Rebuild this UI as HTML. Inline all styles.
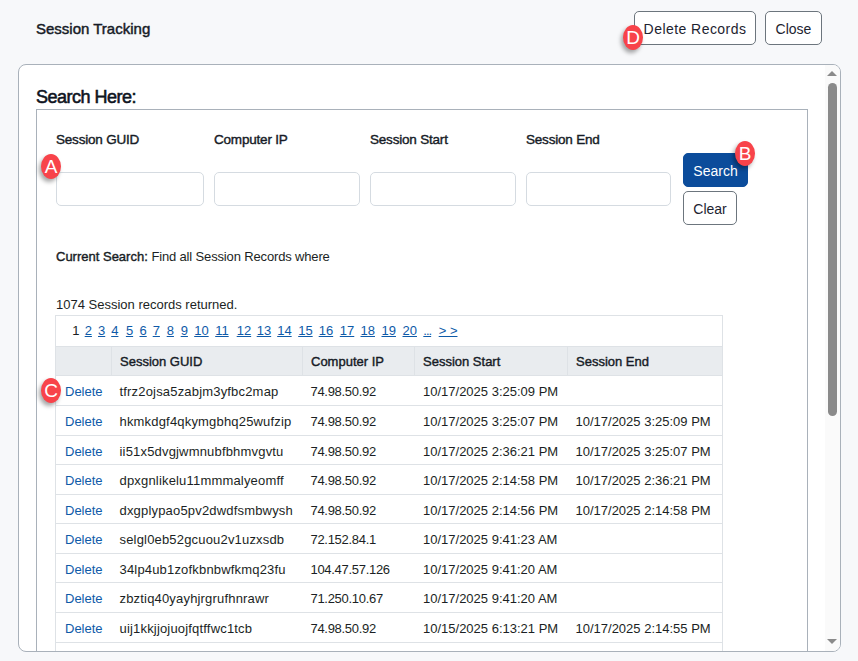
<!DOCTYPE html>
<html>
<head>
<meta charset="utf-8">
<style>
html,body{margin:0;padding:0;}
body{width:858px;height:661px;overflow:hidden;background:#f7f8fa;font-family:"Liberation Sans",sans-serif;color:#1b1f24;position:relative;}
.abs{position:absolute;white-space:nowrap;}
.title{left:36px;top:20px;font-size:15px;font-weight:normal;line-height:17px;color:#161b26;-webkit-text-stroke:0.45px #161b26;}
.btn{position:absolute;box-sizing:border-box;border:1px solid #6c757d;border-radius:5px;background:#fff;font-size:14px;line-height:32px;padding-top:1px;text-align:center;color:#1d2330;}
.badge{position:absolute;width:20px;height:25px;border-radius:50%;background:#f8434a;color:#fff;font-size:19px;line-height:25px;text-align:center;box-shadow:-2px 3px 4px rgba(0,0,0,0.35);}
.panel{position:absolute;left:18px;top:64px;width:823px;height:588px;box-sizing:border-box;border:1px solid #a9b1ba;border-radius:8px;background:#fff;overflow:hidden;}
.sb{position:absolute;left:806px;top:0;width:15px;height:586px;background:#fafafa;}
.inner{position:absolute;left:-19px;top:-65px;width:858px;height:661px;}
.up{position:absolute;left:2px;top:6px;width:0;height:0;border-left:5px solid transparent;border-right:5px solid transparent;border-bottom:5px solid #8a8a8a;}
.dn{position:absolute;left:2px;top:574px;width:0;height:0;border-left:5px solid transparent;border-right:5px solid transparent;border-top:5px solid #8a8a8a;}
.thumb{position:absolute;left:3px;top:18px;width:9px;height:333px;border-radius:5px;background:#8a8a8a;}
.legend{left:36px;top:88px;font-size:18px;letter-spacing:-0.5px;font-weight:normal;line-height:19px;color:#0e1421;-webkit-text-stroke:0.55px #0e1421;}
.fs{position:absolute;left:36px;top:109px;width:772px;height:600px;box-sizing:border-box;border:1px solid #a9b1ba;}
.lbl{position:absolute;top:132px;font-size:13.5px;letter-spacing:-0.2px;font-weight:normal;line-height:15px;color:#161b26;-webkit-text-stroke:0.4px #161b26;}
.inp{position:absolute;top:172px;height:34px;box-sizing:border-box;border:1px solid #d5dbe1;border-radius:5px;background:#fff;}
.txt{font-size:13px;line-height:16px;}
table{position:absolute;left:55px;top:315px;border-collapse:collapse;font-size:13px;table-layout:fixed;}
td,th{border:1px solid #dee2e6;padding:0 0 0 8px;text-align:left;white-space:nowrap;box-sizing:border-box;}
th{background:#e9ecef;font-size:13px;font-weight:normal;color:#161b26;-webkit-text-stroke:0.4px #161b26;}
td{color:#1b1f24;border-left:none;border-right:none;}
td:first-child{border-left:1px solid #dee2e6;}
td:last-child{border-right:1px solid #dee2e6;}
tr td:nth-child(2){letter-spacing:0.18px;}
tr td:nth-child(3){letter-spacing:-0.3px;}
tr td:nth-child(4){padding-left:8.5px;}
td{padding-top:2px;}
.sb2{-webkit-text-stroke:0.4px #161b26;}
td.d{color:#0e5aa8;padding-left:9px;}
.pager td{border-bottom:1px solid #dee2e6;}
.pg{position:absolute;top:323px;font-size:13px;line-height:16px;white-space:nowrap;color:#1b1f24;}
.ln{color:#0e5aa8;text-decoration:underline;}
</style>
</head>
<body>
<div class="abs title">Session Tracking</div>
<div class="btn" style="left:634px;top:11px;width:122px;height:34px;letter-spacing:0.45px;">Delete Records</div>
<div class="btn" style="left:765px;top:11px;width:57px;height:34px;">Close</div>
<div class="badge" style="left:623px;top:25px;">D</div>

<div class="panel"><div class="inner">
<div class="abs legend">Search Here:</div>
<div class="fs"></div>
<div class="lbl" style="left:56px;">Session GUID</div>
<div class="lbl" style="left:214px;">Computer IP</div>
<div class="lbl" style="left:370px;">Session Start</div>
<div class="lbl" style="left:526px;">Session End</div>
<div class="inp" style="left:56px;width:148px;"></div>
<div class="inp" style="left:214px;width:146px;"></div>
<div class="inp" style="left:370px;width:146px;"></div>
<div class="inp" style="left:526px;width:145px;"></div>
<div class="btn" style="left:683px;top:153px;width:65px;height:34px;background:#0b4c9b;border-color:#0b4c9b;color:#fff;">Search</div>
<div class="btn" style="left:683px;top:191px;width:54px;height:34px;">Clear</div>

<div class="abs txt" style="left:56px;top:249px;"><span class="sb2">Current Search:</span> <span style="letter-spacing:-0.15px">Find all Session Records where</span></div>
<div class="abs txt" style="left:56px;top:297px;">1074 Session records returned.</div>

<table>
<colgroup><col style="width:56px"><col style="width:191px"><col style="width:112px"><col style="width:153px"><col style="width:155px"></colgroup>
<tr class="pager" style="height:31px"><td colspan="5"></td></tr>
<tr style="height:29px"><th></th><th>Session GUID</th><th>Computer IP</th><th>Session Start</th><th>Session End</th></tr>
<tr style="height:30px"><td class="d">Delete</td><td>tfrz2ojsa5zabjm3yfbc2map</td><td>74.98.50.92</td><td>10/17/2025 3:25:09 PM</td><td></td></tr>
<tr style="height:30px"><td class="d">Delete</td><td>hkmkdgf4qkymgbhq25wufzip</td><td>74.98.50.92</td><td>10/17/2025 3:25:07 PM</td><td>10/17/2025 3:25:09 PM</td></tr>
<tr style="height:29px"><td class="d">Delete</td><td>ii51x5dvgjwmnubfbhmvgvtu</td><td>74.98.50.92</td><td>10/17/2025 2:36:21 PM</td><td>10/17/2025 3:25:07 PM</td></tr>
<tr style="height:30px"><td class="d">Delete</td><td>dpxgnlikelu11mmmalyeomff</td><td>74.98.50.92</td><td>10/17/2025 2:14:58 PM</td><td>10/17/2025 2:36:21 PM</td></tr>
<tr style="height:29px"><td class="d">Delete</td><td>dxgplypao5pv2dwdfsmbwysh</td><td>74.98.50.92</td><td>10/17/2025 2:14:56 PM</td><td>10/17/2025 2:14:58 PM</td></tr>
<tr style="height:30px"><td class="d">Delete</td><td>selgl0eb52gcuou2v1uzxsdb</td><td>72.152.84.1</td><td>10/17/2025 9:41:23 AM</td><td></td></tr>
<tr style="height:29px"><td class="d">Delete</td><td>34lp4ub1zofkbnbwfkmq23fu</td><td>104.47.57.126</td><td>10/17/2025 9:41:20 AM</td><td></td></tr>
<tr style="height:30px"><td class="d">Delete</td><td>zbztiq40yayhjrgrufhnrawr</td><td>71.250.10.67</td><td>10/17/2025 9:41:20 AM</td><td></td></tr>
<tr style="height:30px"><td class="d">Delete</td><td>uij1kkjjojuojfqtffwc1tcb</td><td>74.98.50.92</td><td>10/15/2025 6:13:21 PM</td><td>10/17/2025 2:14:55 PM</td></tr>
<tr style="height:30px"><td class="d">&nbsp;</td><td></td><td></td><td></td><td></td></tr>
</table>
<span class="pg" style="left:72.3px">1</span><span class="pg ln" style="left:84.7px">2</span><span class="pg ln" style="left:98.0px">3</span><span class="pg ln" style="left:111.2px">4</span><span class="pg ln" style="left:125.9px">5</span><span class="pg ln" style="left:139.5px">6</span><span class="pg ln" style="left:152.7px">7</span><span class="pg ln" style="left:166.7px">8</span><span class="pg ln" style="left:180.7px">9</span><span class="pg ln" style="left:194.2px">10</span><span class="pg ln" style="left:215.2px">11</span><span class="pg ln" style="left:236.7px">12</span><span class="pg ln" style="left:256.7px">13</span><span class="pg ln" style="left:277.2px">14</span><span class="pg ln" style="left:298.2px">15</span><span class="pg ln" style="left:318.7px">16</span><span class="pg ln" style="left:339.8px">17</span><span class="pg ln" style="left:360.5px">18</span><span class="pg ln" style="left:381.5px">19</span><span class="pg ln" style="left:402.5px">20</span><span class="pg ln" style="left:423.3px;letter-spacing:-1px">...</span><span class="pg ln" style="left:438.7px">&gt; &gt;</span>
</div><div class="sb"><div class="thumb"></div><div class="up"></div><div class="dn"></div></div></div>
<div class="badge" style="left:41px;top:154px;">A</div>
<div class="badge" style="left:735px;top:141px;">B</div>
<div class="badge" style="left:41px;top:378px;">C</div>
</body>
</html>
